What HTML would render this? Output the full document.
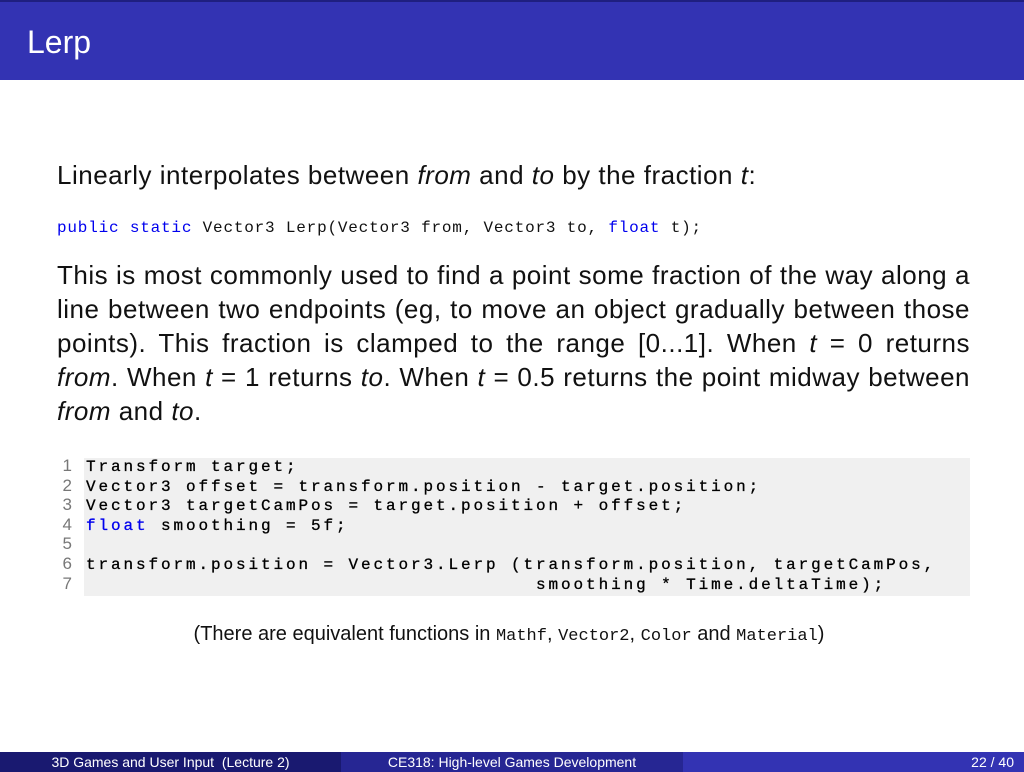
<!DOCTYPE html>
<html><head><meta charset="utf-8"><style>
body{margin:0;width:1024px;height:772px;position:relative;background:#fff;font-family:"Liberation Sans",sans-serif;overflow:hidden}
.hdr{position:absolute;left:0;top:0;width:1024px;height:80px;background:#3333b3;border-top:2px solid #1f1f80;box-sizing:border-box}
.hdr span{position:absolute;left:27px;top:22px;color:#fff;font-size:32px}
.p{position:absolute;left:57px;width:913px;font-size:26px;letter-spacing:0.5px;line-height:34px;color:#111}
.mono{font-family:"Liberation Mono",monospace}
.kw{color:#0000ee}
.code{position:absolute;left:84px;top:458px;width:886px;height:138px;background:#f0f0f0}
.ln{position:absolute;left:58px;width:14px;text-align:right;font-size:17px;color:#777;line-height:19.6px;top:456px}
.cl{position:absolute;left:86px;top:458px;font-family:"Liberation Mono",monospace;font-size:16px;line-height:19.6px;letter-spacing:2.9px;white-space:pre;color:#000;-webkit-text-stroke:0.3px #000}
.cl .kw{-webkit-text-stroke:0.3px #0000ee}
.ft{position:absolute;top:752px;height:20px;color:#fff;font-size:14px;line-height:20px}
</style></head><body>
<div class="hdr"><span>Lerp</span></div>
<div class="p" style="top:158px">Linearly interpolates between <i>from</i> and <i>to</i> by the fraction <i>t</i>:</div>
<div class="mono" style="position:absolute;left:57px;top:219px;font-size:16px;letter-spacing:0.8px;white-space:pre;color:#111"><span class="kw">public</span> <span class="kw">static</span> Vector3 Lerp(Vector3 from, Vector3 to, <span class="kw">float</span> t);</div>
<div class="p" style="top:258px;text-align:justify">This is most commonly used to find a point some fraction of the way along a line between two endpoints (eg, to move an object gradually between those points). This fraction is clamped to the range [0...1]. When <i>t</i> = 0 returns <i>from</i>. When <i>t</i> = 1 returns <i>to</i>. When <i>t</i> = 0.5 returns the point midway between <i>from</i> and <i>to</i>.</div>
<div class="code"></div>
<div class="ln">1<br>2<br>3<br>4<br>5<br>6<br>7</div>
<div class="cl">Transform target;
Vector3 offset = transform.position - target.position;
Vector3 targetCamPos = target.position + offset;
<span class="kw">float</span> smoothing = 5f;

transform.position = Vector3.Lerp (transform.position, targetCamPos,
                                    smoothing * Time.deltaTime);</div>
<div style="position:absolute;left:0;width:1018px;top:623px;text-align:center;font-size:20px;color:#111">(There are equivalent functions in <span class="mono" style="font-size:17px">Mathf</span>, <span class="mono" style="font-size:17px">Vector2</span>, <span class="mono" style="font-size:17px">Color</span> and <span class="mono" style="font-size:17px">Material</span>)</div>
<div class="ft" style="left:0;width:341px;background:#191970;text-align:center">3D Games and User Input &nbsp;(Lecture 2)</div>
<div class="ft" style="left:341px;width:342px;background:#262693;text-align:center">CE318: High-level Games Development</div>
<div class="ft" style="left:683px;width:341px;background:#3333b3;text-align:right"><span style="padding-right:10px">22 / 40</span></div>
</body></html>
